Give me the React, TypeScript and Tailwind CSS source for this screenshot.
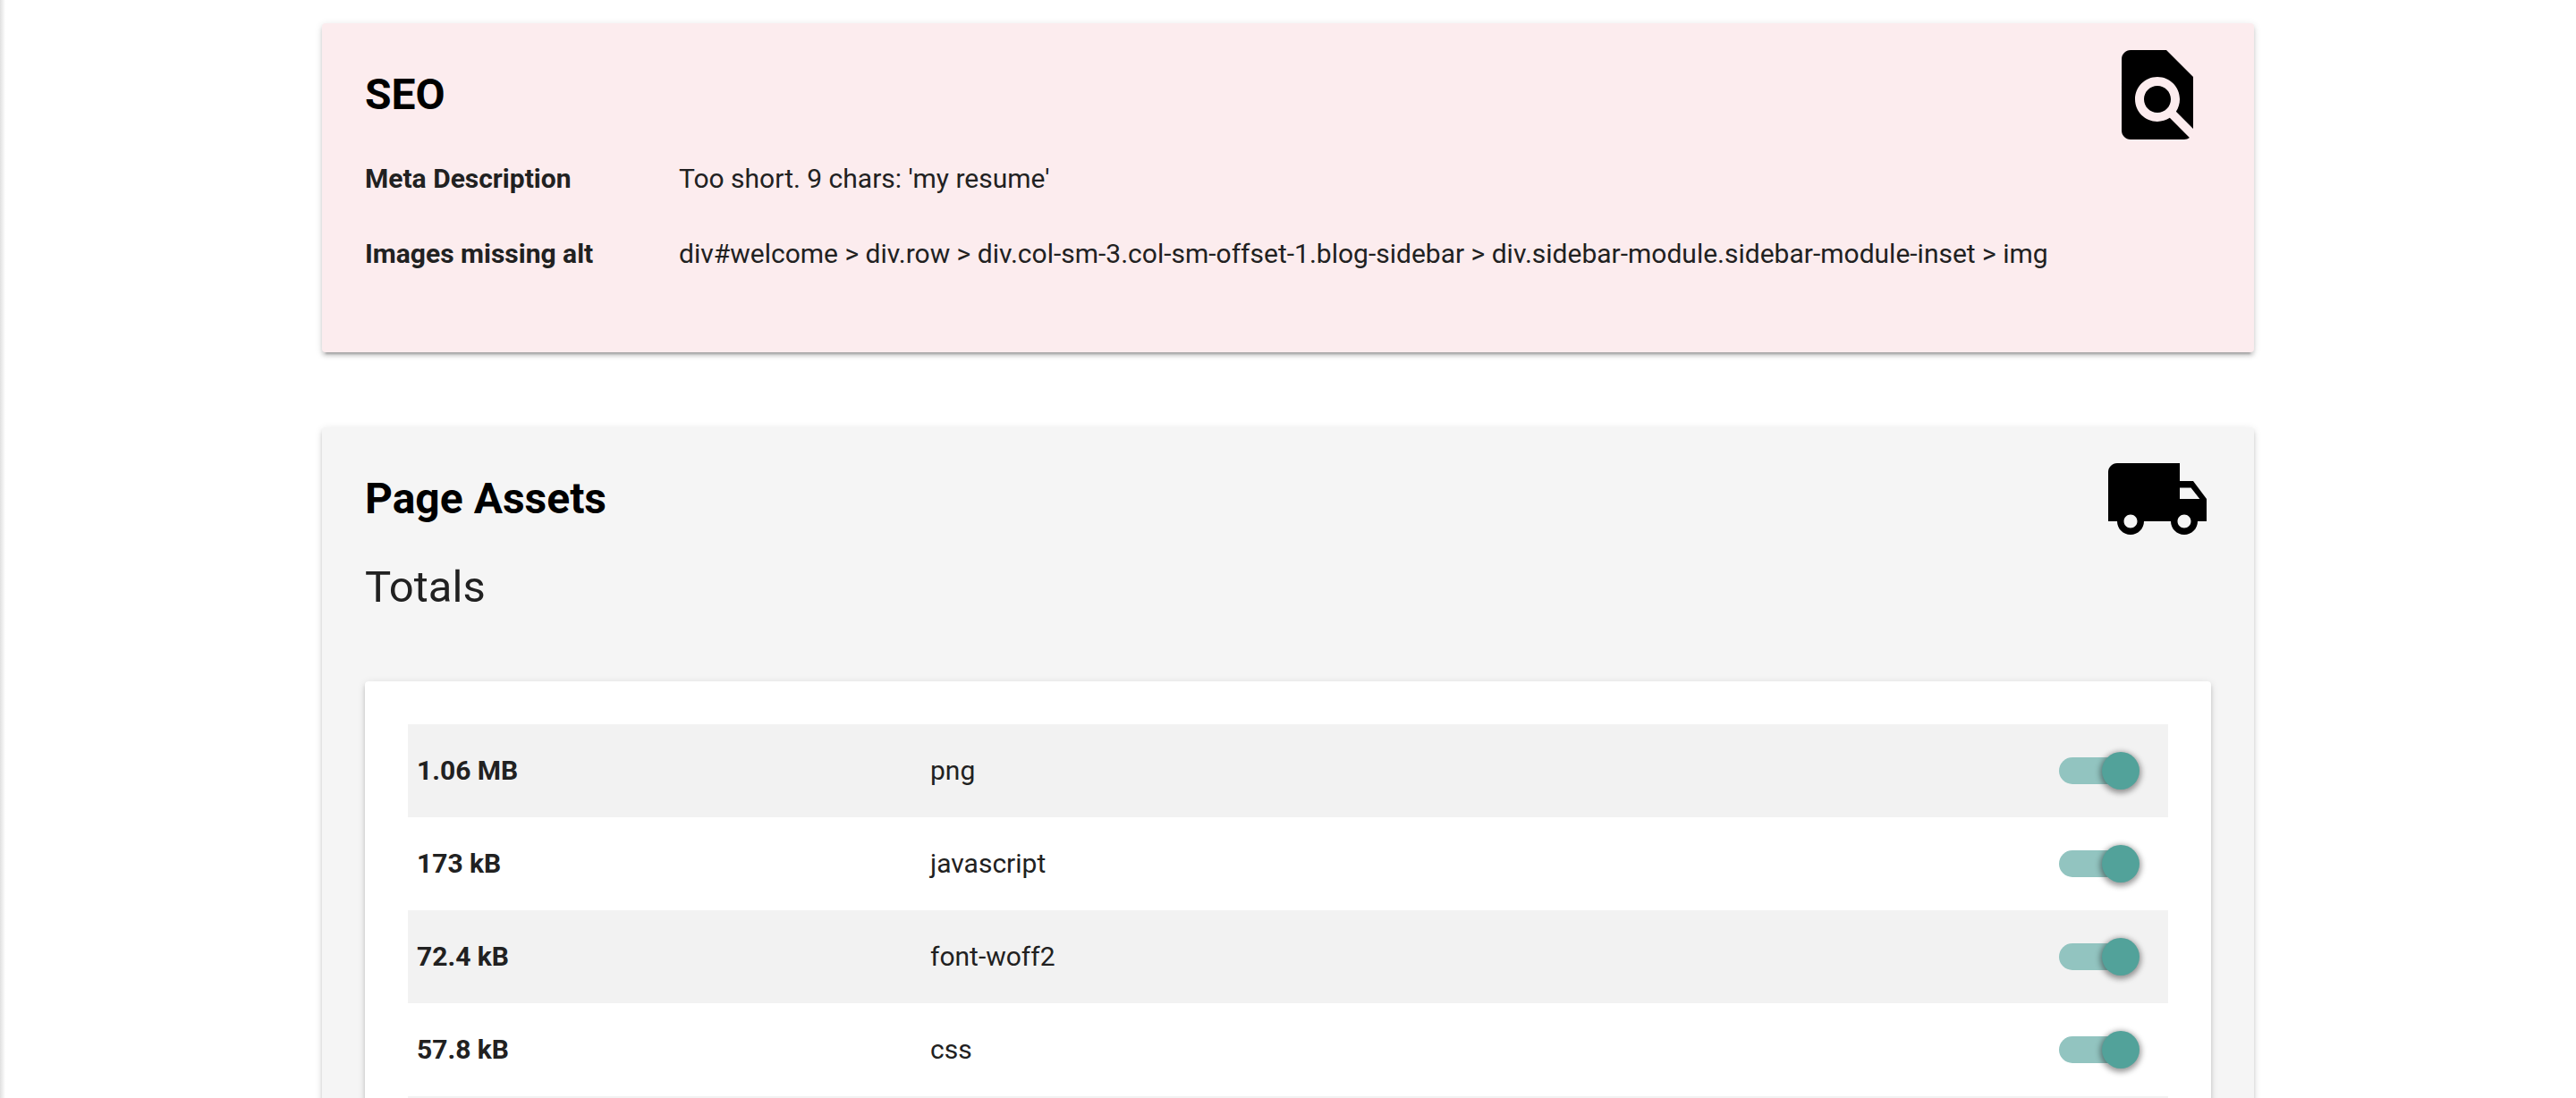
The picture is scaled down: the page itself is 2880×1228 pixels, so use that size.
import { useState, type ReactNode } from "react";

const assets = [
  { size: "1.06 MB", type: "png" },
  { size: "173 kB", type: "javascript" },
  { size: "72.4 kB", type: "font-woff2" },
  { size: "57.8 kB", type: "css" },
];

const cardShadow =
  "rounded shadow-[0_4px_4px_0_rgba(0,0,0,0.14),0_2px_10px_0_rgba(0,0,0,0.12),0_6px_2px_-4px_rgba(0,0,0,0.2)]";

function FindInPageIcon() {
  return (
    <svg viewBox="0 0 24 24" className="size-[120px] shrink-0 fill-black" aria-hidden="true">
      <path d="M20 19.59V8l-6-6H6c-1.1 0-1.99.9-1.99 2L4 20c0 1.1.89 2 1.99 2H18c.45 0 .85-.15 1.19-.4l-4.43-4.43c-.8.52-1.74.83-2.76.83-2.76 0-5-2.24-5-5s2.24-5 5-5 5 2.24 5 5c0 1.02-.31 1.96-.83 2.75L20 19.59zM9 13c0 1.66 1.34 3 3 3s3-1.34 3-3-1.34-3-3-3-3 1.34-3 3z" />
    </svg>
  );
}

function TruckIcon() {
  return (
    <svg viewBox="0 0 24 24" className="size-[120px] shrink-0 fill-black" aria-hidden="true">
      <path d="M20 8h-3V4H3c-1.1 0-2 .9-2 2v11h2c0 1.66 1.34 3 3 3s3-1.34 3-3h6c0 1.66 1.34 3 3 3s3-1.34 3-3h2v-5l-3-4zM6 18.5c-.83 0-1.5-.67-1.5-1.5s.67-1.5 1.5-1.5 1.5.67 1.5 1.5-.67 1.5-1.5 1.5zm13.5-9l1.96 2.5H17V9.5h2.5zm-1.5 9c-.83 0-1.5-.67-1.5-1.5s.67-1.5 1.5-1.5 1.5.67 1.5 1.5-.67 1.5-1.5 1.5z" />
    </svg>
  );
}

function CardHeader({ title, icon }: { title: string; icon: ReactNode }) {
  return (
    <header className="flex items-center justify-between">
      <h2 className="text-5xl font-bold text-black">{title}</h2>
      {icon}
    </header>
  );
}

function Detail({ label, children }: { label: string; children: ReactNode }) {
  return (
    <div className="flex">
      <dt className="w-[351px] shrink-0 font-bold">{label}</dt>
      <dd>{children}</dd>
    </div>
  );
}

function Switch({ label }: { label: string }) {
  const [on, setOn] = useState(true);
  return (
    <input
      type="checkbox"
      role="switch"
      aria-label={label}
      checked={on}
      onChange={() => setOn(!on)}
      className="relative mr-8 block h-[30px] w-20 cursor-pointer appearance-none rounded-full bg-gray-400 before:absolute before:-top-1.5 before:-left-2.5 before:size-[42px] before:rounded-full before:bg-gray-100 before:shadow-[0_2px_6px_2px_rgba(0,0,0,0.4)] before:content-[''] checked:bg-[#92c4c0] checked:before:left-12 checked:before:bg-[#52a29a]"
    />
  );
}

export default function App() {
  return (
    <div className="h-screen overflow-hidden bg-linear-to-r from-[#e0e0e0] to-white to-[6px] font-[Roboto,sans-serif] text-3xl leading-[44px] text-[#212121]">
      <main className="mx-auto flex w-3/4 flex-col gap-[84px] pt-[26px]">
        <section className={`bg-[#fcecee] px-12 pt-5 pb-[88px] ${cardShadow}`}>
          <CardHeader title="SEO" icon={<FindInPageIcon />} />
          <dl className="flex flex-col gap-10 pt-3">
            <Detail label="Meta Description">Too short. 9 chars: 'my resume'</Detail>
            <Detail label="Images missing alt">
              div#welcome &gt; div.row &gt; div.col-sm-3.col-sm-offset-1.blog-sidebar &gt;
              div.sidebar-module.sidebar-module-inset &gt; img
            </Detail>
          </dl>
        </section>

        <section className={`bg-[#f5f5f5] px-12 pt-5 pb-12 ${cardShadow}`}>
          <CardHeader title="Page Assets" icon={<TruckIcon />} />
          <h3 className="pt-3 text-[49px] leading-[54px]">Totals</h3>
          <div className={`mt-[78px] bg-white p-12 ${cardShadow}`}>
            <table className="w-full table-fixed">
              <colgroup>
                <col className="w-[574px]" />
                <col />
                <col className="w-[132px]" />
              </colgroup>
              <tbody>
                {assets.map(({ size, type }) => (
                  <tr key={type} className="h-[104px] odd:bg-[#f2f2f2]">
                    <th scope="row" className="px-2.5 text-left font-bold">
                      {size}
                    </th>
                    <td className="px-2.5">{type}</td>
                    <td className="pl-2.5">
                      <Switch label={`Include ${type}`} />
                    </td>
                  </tr>
                ))}
                <tr className="h-[104px] odd:bg-[#f2f2f2]">
                  <td colSpan={3} />
                </tr>
              </tbody>
            </table>
          </div>
        </section>
      </main>
    </div>
  );
}
